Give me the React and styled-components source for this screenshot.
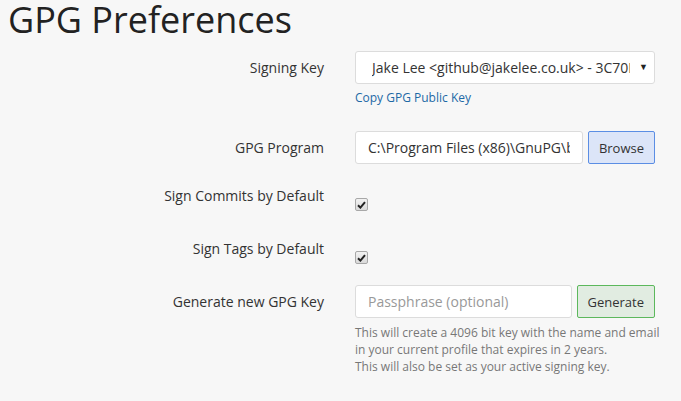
import styled, { createGlobalStyle } from 'styled-components';

const GlobalStyle = createGlobalStyle`
  body {
    margin: 0;
    background: #f7f7f7;
    font-family: "Open Sans", "Liberation Sans", sans-serif;
    color: #333;
  }
`;

const Page = styled.div`
  padding: 0 8px;
  width: 681px;
  height: 401px;
  box-sizing: border-box;
  overflow: hidden;
`;

const Title = styled.h1`
  margin: 0 0 11px;
  font-size: 36px;
  font-weight: 400;
  line-height: 40px;
  color: #222;
`;

const Row = styled.div`
  display: grid;
  grid-template-columns: 316px 300px;
  column-gap: 31px;
  margin-bottom: 15px;
  min-height: ${(p) => (p.$tall ? '38px' : 'auto')};
`;

const Label = styled.div`
  text-align: right;
  font-size: 14px;
  line-height: 20px;
  padding-top: 7px;
  color: #333;
  white-space: nowrap;
`;

const Control = styled.div`
  display: flex;
  flex-direction: column;
  padding-top: ${(p) => p.$offset || 0}px;
`;

const SelectWrap = styled.div`
  position: relative;
  width: 300px;
`;

const Select = styled.select`
  appearance: none;
  width: 100%;
  height: 33px;
  box-sizing: border-box;
  border: 1px solid #dcdcdc;
  border-radius: 3px;
  background: #fff;
  padding: 0 24px 0 16px;
  font-family: inherit;
  font-size: 14px;
  color: #333;
  outline: none;
`;

const Arrow = styled.span`
  position: absolute;
  right: 7px;
  top: 11px;
  font-size: 9px;
  line-height: 10px;
  color: #222;
  pointer-events: none;
`;

const Link = styled.a`
  display: block;
  margin: 5px 0 10px;
  font-size: 12px;
  line-height: 17px;
  color: #1d69a6;
  text-decoration: none;
`;

const InputGroup = styled.div`
  display: flex;
  gap: 5px;
  width: 300px;
`;

const TextInput = styled.input`
  flex: 1;
  min-width: 0;
  height: 33px;
  box-sizing: border-box;
  border: 1px solid #dcdcdc;
  border-radius: 3px;
  background: #fff;
  padding: 0 12px;
  font-family: inherit;
  font-size: 14px;
  color: #333;
  outline: none;

  &::placeholder {
    color: #999;
  }
`;

const Button = styled.button`
  height: 33px;
  padding: 0 10px;
  border-radius: 2px;
  border: 1px solid ${(p) => (p.$tone === 'green' ? '#5cb85c' : '#5b8ee4')};
  background: ${(p) => (p.$tone === 'green' ? '#e1ece1' : '#dce5f8')};
  font-family: inherit;
  font-size: 13px;
  color: #333;
  cursor: pointer;
`;

const Check = styled.span`
  display: inline-flex;
  align-items: center;
  justify-content: center;
  width: 13px;
  height: 13px;
  box-sizing: border-box;
  border: 1px solid #a8a8a8;
  border-radius: 2px;
  background: linear-gradient(#f2f2f2, #dadada);
`;

const Help = styled.p`
  margin: 6px 0 0;
  font-size: 12px;
  line-height: 17px;
  color: #777;
  white-space: nowrap;
`;

const CheckBox = () => (
  <Check>
    <svg width="9" height="8" viewBox="0 0 9 8">
      <path d="M1 4.2 L3.4 6.6 L8 1.2" fill="none" stroke="#222" strokeWidth="2" />
    </svg>
  </Check>
);

const App = () => (
  <Page>
    <GlobalStyle />
    <Title>GPG Preferences</Title>

    <Row>
      <Label>Signing Key</Label>
      <Control>
        <SelectWrap>
          <Select defaultValue="k">
            <option value="k">Jake Lee &lt;github@jakelee.co.uk&gt; - 3C70D5A1</option>
          </Select>
          <Arrow>▼</Arrow>
        </SelectWrap>
        <Link href="#">Copy GPG Public Key</Link>
      </Control>
    </Row>

    <Row>
      <Label>GPG Program</Label>
      <Control>
        <InputGroup>
          <TextInput defaultValue="C:\Program Files (x86)\GnuPG\bin\gpg.exe" />
          <Button>Browse</Button>
        </InputGroup>
      </Control>
    </Row>

    <Row $tall>
      <Label>Sign Commits by Default</Label>
      <Control $offset={19}>
        <CheckBox />
      </Control>
    </Row>

    <Row $tall>
      <Label>Sign Tags by Default</Label>
      <Control $offset={19}>
        <CheckBox />
      </Control>
    </Row>

    <Row>
      <Label>Generate new GPG Key</Label>
      <Control>
        <InputGroup>
          <TextInput placeholder="Passphrase (optional)" />
          <Button $tone="green">Generate</Button>
        </InputGroup>
        <Help>
          This will create a 4096 bit key with the name and email
          <br />
          in your current profile that expires in 2 years.
          <br />
          This will also be set as your active signing key.
        </Help>
      </Control>
    </Row>
  </Page>
);

export default App;
